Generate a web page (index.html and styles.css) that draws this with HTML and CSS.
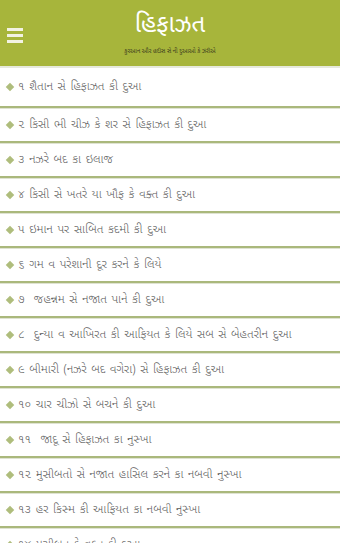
FILE: index.html
```html
<!DOCTYPE html>
<html>
<head>
<meta charset="utf-8">
<link rel="stylesheet" href="styles.css">
</head>
<body>
<header class="top">
  <div class="menu"><span></span><span></span><span></span></div>
  <div class="titles">
    <div class="title">હિફાઝત</div>
    <div class="sub">કુરઆન ઔર હદીસ સે ની દુઆઓ કે ઝરીએ</div>
  </div>
</header>
<ul class="list">
  <li>૧ શૈતાન સે હિફાઝત કી દુઆ</li>
  <li>૨ કિસી ભી ચીઝ કે શર સે હિફાઝત કી દુઆ</li>
  <li>૩ નઝરે બદ કા ઇલાજ</li>
  <li>૪ કિસી સે ખતરે યા ખૌફ કે વક્ત કી દુઆ</li>
  <li>૫ ઇમાન પર સાબિત કદમી કી દુઆ</li>
  <li>૬ ગમ વ પરેશાની દૂર કરને કે લિયે</li>
  <li>૭&nbsp; જહન્નમ સે નજાત પાને કી દુઆ</li>
  <li>૮&nbsp; દુન્યા વ આખિરત કી આફિયત કે લિયે સબ સે બેહતરીન દુઆ</li>
  <li>૯ બીમારી (નઝરે બદ વગેરા) સે હિફાઝત કી દુઆ</li>
  <li>૧૦ ચાર ચીઝો સે બચને કી દુઆ</li>
  <li>૧૧&nbsp; જાદૂ સે હિફાઝત કા નુસ્ખા</li>
  <li>૧૨ મુસીબતો સે નજાત હાસિલ કરને કા નબવી નુસ્ખા</li>
  <li>૧૩ હર કિસ્મ કી આફિયત કા નબવી નુસ્ખા</li>
  <li>૧૪ મુસીબત કે વક્ત કી દુઆ</li>
</ul>
</body>
</html>
```
FILE: styles.css
```css
html, body { margin: 0; padding: 0; background: #fff; overflow: hidden; }
body { font-family: "Noto Sans Gujarati", "Noto Sans", "DejaVu Sans", sans-serif; width: 340px; height: 543px; }
.top {
  height: 66px;
  background: #a7b53b;
  border-bottom: 2px solid #e6e9dc;
  display: flex;
  align-items: center;
  position: relative;
}
.menu {
  position: absolute;
  left: 7px; top: 28px;
  display: flex; flex-direction: column; gap: 3px;
}
.menu span { display: block; width: 16px; height: 3px; background: #f2f2e2; }
.titles { flex: 1; text-align: center; padding-top: 2px; }
.title { color: #fff; font-size: 24px; line-height: 30px; font-weight: 400; }
.sub { color: #3c3c1e; font-size: 6px; line-height: 10px; margin-top: 6px; }
.list { list-style: none; margin: 0; padding: 0; }
.list li {
  height: 33px;
  border-bottom: 2px solid #aab87c;
  box-shadow: 0 1px 0 #dfe3d2;
  display: flex; align-items: center;
  padding-left: 18px;
  position: relative;
  font-size: 12px;
  font-weight: 300;
  word-spacing: 1.5px;
  color: #5a5a5a;
  white-space: nowrap;
}
.list li:first-child { height: 38px; }
.list li::before {
  content: "";
  position: absolute;
  left: 7px; top: 50%;
  width: 6px; height: 6px;
  margin-top: -3px;
  background: #afbd7c;
  transform: rotate(45deg);
}
```
